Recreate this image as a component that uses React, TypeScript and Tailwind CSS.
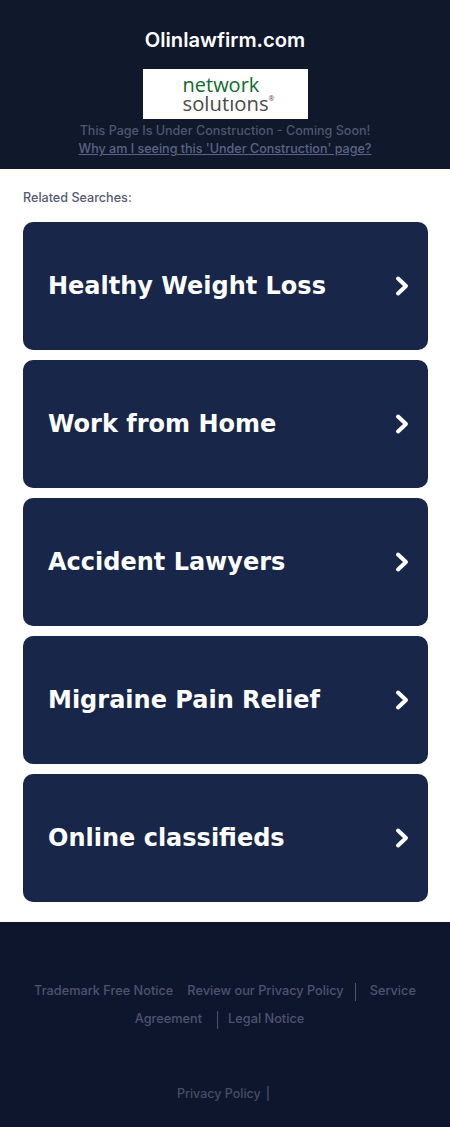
const searches = [
  "Healthy Weight Loss",
  "Work from Home",
  "Accident Lawyers",
  "Migraine Pain Relief",
  "Online classifieds",
];

function Chevron() {
  return (
    <svg width="16" height="24" viewBox="0 0 16 24" fill="none" className="shrink-0">
      <path d="M4 4.5 L12 12 L4 19.5" stroke="white" strokeWidth="4" strokeLinecap="round" strokeLinejoin="round" />
    </svg>
  );
}

export default function App() {
  return (
    <div className="w-[450px] h-[1127px] flex flex-col bg-white font-['Inter',sans-serif]">
      {/* header */}
      <div className="h-[169px] bg-[#10182c] flex flex-col items-center pt-[27px]">
        <h1 className="text-[20.2px] leading-[26px] font-semibold text-white">Olinlawfirm.com</h1>
        <div className="mt-[16px] w-[165px] h-[50px] bg-white flex flex-col items-start justify-center pl-[40px]">
          <span className="font-['Open_Sans',sans-serif] font-medium text-[20px] leading-[18px] text-[#0f6b2e]">network</span>
          <span className="font-['Open_Sans',sans-serif] text-[20.3px] leading-[18px] text-[#4a4a4a]">
            solutıons<span className="text-[7px] align-top leading-[10px]">®</span>
          </span>
        </div>
        <p className="mt-[3px] text-[12.55px] leading-[18px] font-medium text-[#4f566f]">This Page Is Under Construction - Coming Soon!</p>
        <a className="text-[12.55px] leading-[18px] font-medium text-[#5b6484] underline">Why am I seeing this 'Under Construction' page?</a>
      </div>

      {/* related searches */}
      <div className="flex-1 px-[23px] pr-[22px] pt-[20px]">
        <p className="text-[12.6px] leading-[18px] font-medium text-[#555b72]">Related Searches:</p>
        <div className="mt-[15px] flex flex-col gap-[10px]">
          {searches.map((s) => (
            <a key={s} className="h-[128px] rounded-[10px] bg-[#18264a] flex items-center justify-between pl-[25px] pr-[18px]">
              <span className="font-['DejaVu_Sans',sans-serif] font-bold text-[24px] text-white">{s}</span>
              <Chevron />
            </a>
          ))}
        </div>
      </div>

      {/* footer */}
      <div className="h-[205px] bg-[#0e162d] pt-[55px] text-center text-[12.75px] font-medium text-[#4d5370]">
        <div className="px-[30px] leading-[28px]">
          <a>Trademark Free Notice</a>
          <a className="ml-[14px]">Review our Privacy Policy</a>
          <span className="inline-block w-px h-[18px] bg-[#4d5370] ml-[11px] mr-[14px] align-middle"></span>
          <a>Service Agreement</a>
          <span className="inline-block w-px h-[18px] bg-[#4d5370] ml-[15px] mr-[10px] align-middle"></span>
          <a className="mr-[11px]">Legal Notice</a>
        </div>
        <p className="mt-[52px] pr-[3px] leading-[18px] text-[12.5px] text-[#474d66]">
          Privacy Policy<span className="ml-[5px]">|</span>
        </p>
      </div>
    </div>
  );
}
